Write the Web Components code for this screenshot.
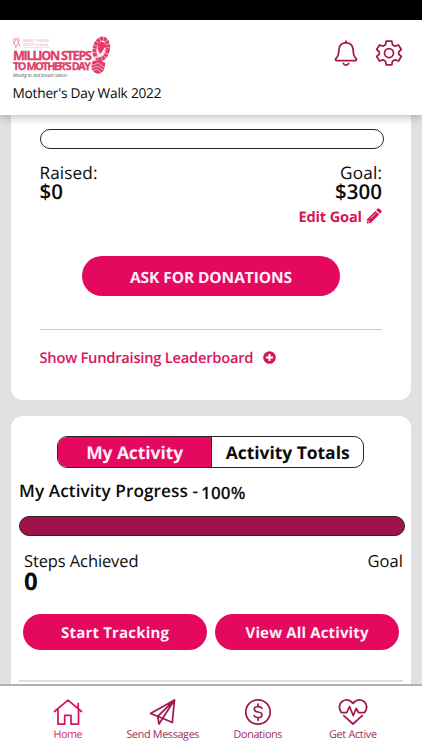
<!DOCTYPE html>
<html lang="en"><head><meta charset="utf-8"><title>Mother's Day Walk 2022</title>
<style>
html,body{margin:0;height:750px;overflow:hidden;background:#e1e1e1;font-family:"Open Sans","Noto Sans",sans-serif;color:#0b0b0b}
</style></head><body>
<walk-app></walk-app>
<script>
const define=(name,html,after)=>customElements.define(name,class extends HTMLElement{
  connectedCallback(){
    if(this.shadowRoot)return;
    this.attachShadow({mode:'open'}).innerHTML=html;
    if(after)after(this,this.shadowRoot);
  }
});

/* Single line label; "w" is its advance width, "size" and "weight" its type. */
define('fit-text',`<style>:host{display:block;line-height:20px;white-space:nowrap}span{display:inline-block;vertical-align:top;text-rendering:geometricPrecision;transform:translateY(var(--drop,1px))}</style><span><slot></slot></span>`,(el,root)=>{
  const s=root.querySelector('span');
  s.style.fontSize=el.getAttribute('size')+'px';
  s.style.fontWeight=el.getAttribute('weight')||400;
  const w=+el.getAttribute('w');
  if(w){
    const n=el.textContent.length, gap=(w-s.getBoundingClientRect().width)/(n-1);
    s.style.letterSpacing=gap+'px';
    s.style.marginRight=-gap+'px';
  }
});

define('pill-button',`<style>:host{display:flex;align-items:center;justify-content:center;box-sizing:border-box;border-radius:20px;background:#e4085f;color:#fff0f7}</style><slot></slot>`);

define('progress-bar',`<style>:host{display:block;box-sizing:border-box;height:20px;border:1.4px solid #2b2529;border-radius:10px;background:var(--fill,#fff)}</style>`);

define('walk-card',`<style>:host{display:block;box-sizing:border-box;width:400px;margin:0 11px;background:#fff;border-radius:12px}</style><slot></slot>`);

define('walk-logo',`<style>:host{display:block;width:102px;height:46px}svg{display:block}text{font-family:"Open Sans",sans-serif;text-rendering:geometricPrecision}</style>
<svg width="102" height="46" viewBox="0 0 102 46">
<g fill="none" stroke="#e9849f" stroke-width=".9"><path d="M5 12.500C0 7 1 3 3 3.500S7 8 8 12M3 13C6 9 8 6 6.500 3.500S2 8 2 9"/></g>
<g fill="#e995ab" font-size="4"><text x="11" y="6.500" textLength="26" lengthAdjust="spacingAndGlyphs">BREAST CANCER</text><text x="11" y="10.500" textLength="25" lengthAdjust="spacingAndGlyphs">SOCIETY of canada</text></g>
<path d="M11 12.500H38" stroke="#f3b6c6" stroke-width=".5"/>
<g fill="#e13d68" stroke="#e13d68" stroke-width=".3" font-weight="700"><text x="1" y="24.800" font-size="12.600" textLength="79" lengthAdjust="spacing">MILLION STEPS</text><text x="1" y="35" font-size="10.800" textLength="78" lengthAdjust="spacing">TO MOTHER'S DAY</text></g>
<text x="1" y="41.500" font-size="5" font-style="italic" fill="#4b4448" textLength="55" lengthAdjust="spacingAndGlyphs">Moving to end breast cancer.</text>
<g transform="translate(-1 0) rotate(12 90 20)"><ellipse cx="89" cy="14" rx="6.600" ry="10.500" fill="#fbe6ec" stroke="#e13d68" stroke-width="4" stroke-dasharray="3.200 .5"/>
<path d="M85 9Q89 4.500 93 9Q94.500 15 89.500 19.500Q84 15 85 9Z" fill="#e13d68"/><path d="M84 25Q91 20 92.500 12" stroke="#fff" fill="none" stroke-width="1.200"/>
<path d="M83 28Q89 24 96 27V34Q94 39 89.500 39Q84 38 83 33Z" fill="#e13d68"/><path d="M83 32L89 28.500L96 31.500M83.500 35L89 31.500L96 34.500M85 37.500L89 34.500L94.500 37.500" fill="none" stroke="#fbe3eb" stroke-width=".6"/></g>
</svg>`);

const icons={
bell:['26','28','<path d="M3.200 21.500H22.800Q24 20.500 22.800 19C20 17 20.600 14 20 10C19.500 6.500 17 4 13 3.700C9 4 6.500 6.500 6 10C5.400 14 6 17 3.200 19Q2 20.500 3.200 21.500ZM13 3.700V2M10.300 24.500Q13 27.800 15.700 24.500"/>'],
gear:['28','28','<path d="M11.200 2.200H16.800L17.500 5.800L20 7.200L23.500 6L26.300 10.500L23.700 12.900V15.100L26.300 17.500L23.500 22L20 20.800L17.500 22.200L16.800 25.800H11.200L10.500 22.200L8 20.800L4.500 22L1.700 17.500L4.300 15.100V12.900L1.700 10.500L4.500 6L8 7.200L10.500 5.800Z"/><circle cx="14" cy="14" r="4.500"/>'],
home:['30','28','<path d="M1.500 13.500L15 2.200L28.500 13.500M5 12V26H11.700V17.300H18V26H25.500V12M25.200 5.500V10.500"/>'],
send:['30','28','<path d="M2.500 15.500L26.500 2L24.300 24.500L14.500 20.200ZM26.500 2L9.800 18.300L11 26L14.700 20.300Z"/>'],
dollar:['30','28','<circle cx="15" cy="14" r="12.200"/><path d="M19 10.300Q18 8.500 15 8.500Q11.200 8.700 11.300 11.300Q11.500 13.500 15 14Q19 14.500 19 17Q18.800 19.700 15 19.700Q12 19.700 11 17.700M15 6V8.500M15 19.700V22.300"/>'],
heart:['30','28','<path d="M3.300 14.500Q-1 7.500 4 3.500Q10 -.3 15 5.300Q20 -.3 26 3.500Q31 7.500 26.700 14.500H20.500L18.200 10.500L15.200 17.500L11.500 8.500L8.800 14.500H3.300M5.800 17.700L15 26L24.200 17.700"/>']
};
define('line-icon',`<style>:host{display:block;color:#a1184f}svg{display:block;fill:none;stroke:currentColor;stroke-width:1.75;stroke-linecap:round;stroke-linejoin:round}</style>`,(el,root)=>{
  const [w,h,p]=icons[el.getAttribute('name')];
  root.innerHTML+=`<svg width="${w}" height="${h}" viewBox="0 0 ${w} ${h}">${p}</svg>`;
});

define('walk-header',`<style>:host{display:block;position:relative;z-index:2;box-sizing:border-box;height:115px;background:#fff;border-top:20.500px solid #000;box-shadow:0 2px 9px rgba(0,0,0,.27)}
.top{display:flex;justify-content:space-between;padding:14.500px 19px 0 12px;height:47px}.icons{display:flex;gap:16px;padding-top:4px}.name{--drop:0px;padding-left:12.500px;margin-top:2px;height:17.500px;overflow:hidden}</style>
<div class="top"><walk-logo></walk-logo><div class="icons"><line-icon name="bell"></line-icon><line-icon name="gear"></line-icon></div></div>
<div class="name"><fit-text size="13.700" w="149">Mother's Day Walk 2022</fit-text></div>`);

define('fundraising-card',`<style>:host{display:block}walk-card{height:285px;padding:14px 29px 0 28.500px;border-radius:0 0 12px 12px}.bar{margin-right:-2px}
.row{display:flex;justify-content:space-between;margin-top:14px}.right{display:flex;flex-direction:column;align-items:flex-end}.big{margin-top:-1px}.cap{line-height:19px}
.pink{color:#d7145e}.edit{display:flex;justify-content:flex-end;gap:4px;margin-top:5px;align-items:center}
svg{display:block}pill-button{width:258px;height:40px;margin:30px 0 0 42.500px}hr{border:0;height:1px;background:#c9c9c9;margin:33px 0 17px}.link{display:flex;gap:10px;align-items:center}</style>
<walk-card><progress-bar class="bar"></progress-bar>
<div class="row"><div><fit-text class="cap" size="17.200" w="58">Raised:</fit-text><fit-text class="big" size="20.500" weight="600" w="23.500">$0</fit-text></div>
<div class="right"><fit-text class="cap" size="17.200" w="42">Goal:</fit-text><fit-text class="big" size="20.500" weight="600" w="47">$300</fit-text></div></div>
<div class="edit pink"><fit-text size="14.600" weight="700" w="63.500">Edit Goal</fit-text><svg width="16" height="16" viewBox="0 0 16 16"><path d="M1 11.200L9.400 2.900L13.100 6.600L4.800 14.900L.7 15.400ZM10.200 2L11.700.6Q12.600-.1 13.500.7L15.300 2.500Q16 3.400 15.300 4.300L13.900 5.800Z" fill="#d7145e"/><path d="M4.500 10.500L9.600 5.500M1.900 12.400V14H3.500" stroke="#fff" stroke-width=".7" fill="none"/></svg></div>
<pill-button><fit-text size="15.500" weight="700" w="162">ASK FOR DONATIONS</fit-text></pill-button><hr>
<div class="link pink"><fit-text size="14.700" weight="600" w="214">Show Fundraising Leaderboard</fit-text><svg width="13" height="13" viewBox="0 0 13 13"><circle cx="6.500" cy="6.500" r="6.300" fill="#d7145e"/><path d="M6.500 3V10M3 6.500H10" stroke="#fff" stroke-width="2"/></svg></div></walk-card>`);

define('activity-tabs',`<style>:host{display:flex;box-sizing:border-box;width:307px;height:32px;border:1.300px solid #29232a;border-radius:10px;overflow:hidden;margin-left:46.400px}
div{display:flex;align-items:center;justify-content:center;box-sizing:border-box}.on{width:153.500px;background:#e4085f;color:#fff0f7;border-right:1px solid #29232a}.off{flex:1}</style>
<div class="on"><fit-text size="17.500" weight="700" w="97">My Activity</fit-text></div><div class="off"><fit-text size="17.500" weight="700" w="124">Activity Totals</fit-text></div>`);

define('activity-card',`<style>:host{display:block;margin-top:15.500px}walk-card{height:300px;padding-top:20px}.title{display:flex;gap:3px;margin:13.500px 0 14.500px 8px}.pct{margin:1px 0 -1px}
progress-bar{--fill:#9c1249;width:386px;margin-left:8px}.row{display:flex;justify-content:space-between;padding:14.500px 8px 0 13px}.zero{margin-top:.5px}
.buttons{display:flex;gap:8px;margin:23px 0 0 12px}pill-button{width:184px;height:36px}hr{border:0;margin:30px 8px 0;height:2px;background:#dedede}</style>
<walk-card><activity-tabs></activity-tabs><div class="title"><fit-text size="17.200" weight="600" w="179">My Activity Progress -</fit-text><fit-text class="pct" size="17" weight="600" w="44.500">100%</fit-text></div>
<progress-bar></progress-bar><div class="row"><div><fit-text size="16.500" w="114.500">Steps Achieved</fit-text><fit-text class="zero" size="24" weight="700">0</fit-text></div><fit-text size="16.500" w="35.500">Goal</fit-text></div>
<div class="buttons"><pill-button><fit-text size="15" weight="700" w="108">Start Tracking</fit-text></pill-button><pill-button><fit-text size="15" weight="700" w="123">View All Activity</fit-text></pill-button></div><hr></walk-card>`);

define('nav-item',`<style>:host{display:flex;flex-direction:column;align-items:center;width:95px;color:#a02c58}slot{display:block}</style><slot name="icon"></slot><slot></slot>`);

define('walk-nav',`<style>:host{display:flex;position:fixed;left:0;right:0;bottom:0;z-index:2;box-sizing:border-box;height:66px;padding:12px 20.500px 0;background:#fff;border-top:2px solid #b1b1b1}
.home{color:#d62a70}.home line-icon{color:#d6145f}fit-text{margin-top:-2px}</style>
<nav-item class="home"><line-icon slot="icon" name="home"></line-icon><fit-text size="10.800" w="29">Home</fit-text></nav-item>
<nav-item><line-icon slot="icon" name="send"></line-icon><fit-text size="10.800" w="73">Send Messages</fit-text></nav-item>
<nav-item><line-icon slot="icon" name="dollar"></line-icon><fit-text size="10.800" w="49">Donations</fit-text></nav-item>
<nav-item><line-icon slot="icon" name="heart"></line-icon><fit-text size="10.800" w="48">Get Active</fit-text></nav-item>`);

define('walk-app',`<style>:host{display:block;height:750px;overflow:hidden}</style><walk-header></walk-header><fundraising-card></fundraising-card><activity-card></activity-card><walk-nav></walk-nav>`);
</script></body></html>
